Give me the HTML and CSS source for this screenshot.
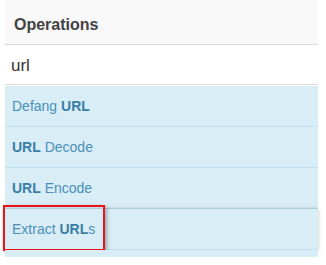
FILE: index.html
```
<!DOCTYPE html>
<html>
<head>
<meta charset="utf-8">
<link rel="stylesheet" href="styles.css">
</head>
<body>
<div class="panel">
  <div class="header">Operations</div>
  <div class="search">url</div>
  <ul class="ops">
    <li class="op">Defang <b>URL</b></li>
    <li class="op"><b>URL</b> Decode</li>
    <li class="op"><b>URL</b> Encode</li>
    <li class="op drag">Extract <b>URL</b>s<span class="mark"></span></li>
    <li class="op partial"></li>
  </ul>
</div>
</body>
</html>
```
FILE: styles.css
```
html, body {
  margin: 0;
  padding: 0;
  background: #fff;
  width: 326px;
  height: 265px;
  overflow: hidden;
  font-family: "Liberation Sans", Arial, sans-serif;
}
.panel {
  margin-left: 5px;
  width: 313px;
}
.header {
  height: 45px;
  box-sizing: border-box;
  background: #f8f8f8;
  border-bottom: 1px solid #dcdcdc;
  padding-left: 9px;
  padding-top: 3px;
  line-height: 44px;
  font-size: 16px;
  font-weight: bold;
  color: #424242;
}
.search {
  height: 40px;
  box-sizing: border-box;
  border-bottom: 1px solid #dcdcdc;
  padding-left: 6px;
  line-height: 42px;
  font-size: 17px;
  color: #333;
  background: #fff;
}
.ops {
  list-style: none;
  margin: 1px 0 0 0;
  padding: 0;
}
.op {
  position: relative;
  height: 41px;
  box-sizing: border-box;
  background: #d9edf7;
  border-bottom: 1px solid #bfe3f0;
  padding-left: 7px;
  line-height: 40px;
  font-size: 14px;
  color: #4a90b8;
}
.op b {
  color: #3a7ea6;
}
.drag {
  box-shadow: 0 0 4px rgba(0, 0, 0, 0.25);
}
.mark {
  position: absolute;
  left: -2px;
  top: -4px;
  width: 98px;
  height: 42px;
  border: 2px solid #e8141a;
  box-shadow: 2px 2px 4px rgba(0, 0, 0, 0.3);
}
.partial {
  height: 7px;
  border-bottom: none;
}
```
